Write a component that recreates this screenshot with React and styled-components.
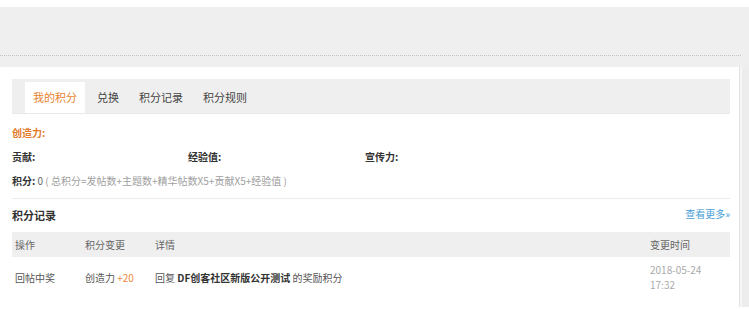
import React from 'react'
import styled, { createGlobalStyle } from 'styled-components'

const GlobalStyle = createGlobalStyle`
  html, body {
    margin: 0;
    padding: 0;
    background: #fff;
  }
  body {
    font-family: "Noto Sans CJK SC", "Liberation Sans", sans-serif;
    font-size: 10px;
    color: #333;
  }
`

const tabs = ['我的积分', '兑换', '积分记录', '积分规则']

const App = () => {
  return (
    <>
      <GlobalStyle />
      <Page>
        <Banner />
        <Body>
          <Panel>
            <TabBar>
              {tabs.map((t, i) => (
                <Tab key={t} active={i === 0}>
                  {t}
                </Tab>
              ))}
            </TabBar>

            <Stats>
              <InfoLine>
                <Label orange>创造力:</Label>
              </InfoLine>
              <StatGrid>
                <Label>贡献:</Label>
                <Label>经验值:</Label>
                <Label>宣传力:</Label>
              </StatGrid>
              <InfoLine>
                <Label>积分:</Label> <Value>0</Value>{' '}
                <Hint>( 总积分=发帖数+主题数+精华帖数X5+贡献X5+经验值 )</Hint>
              </InfoLine>
            </Stats>

            <SectionHead>
              <SectionTitle>积分记录</SectionTitle>
              <MoreLink href="#">查看更多»</MoreLink>
            </SectionHead>

            <Table>
              <HeadRow>
                <Cell w={70}>操作</Cell>
                <Cell w={70}>积分变更</Cell>
                <Cell grow>详情</Cell>
                <Cell w={83}>变更时间</Cell>
              </HeadRow>
              <Row>
                <Cell w={70}>回帖中奖</Cell>
                <Cell w={70}>
                  创造力 <Plus>+20</Plus>
                </Cell>
                <Cell grow>
                  回复 <Strong>DF创客社区新版公开测试</Strong> 的奖励积分
                </Cell>
                <DateCell w={83}>
                  2018-05-24
                  <br />
                  17:32
                </DateCell>
              </Row>
            </Table>
          </Panel>
          <SideStrip />
        </Body>
      </Page>
    </>
  )
}

export default App

const Page = styled.div`
  padding-top: 7px;
  background: #fff;
  height: 302px;
  overflow: hidden;
`

const Banner = styled.div`
  width: 741px;
  height: 48px;
  background: #efefef;
  border-bottom: 1px dotted #c4c4c4;
  position: relative;
  &::after {
    content: '';
    position: absolute;
    left: 741px;
    top: 0;
    width: 8px;
    height: 49px;
    background: #efefef;
  }
`

const Body = styled.div`
  display: flex;
  background: #efefef;
  padding-top: 11px;
  height: 240px;
`

const Panel = styled.div`
  width: 718px;
  padding: 12px 9px 0 12px;
  background: #fff;
  border-right: 1px solid #e2e2e2;
`

const SideStrip = styled.div`
  flex: 1;
  border-left: 2px solid #f6f6f6;
  background: #ededed;
`

const TabBar = styled.div`
  display: flex;
  align-items: flex-end;
  height: 35px;
  background: #efefef;
  padding-left: 13px;
  border-bottom: 1px solid #e9e9e9;
  box-sizing: border-box;
`

const Tab = styled.div`
  height: 31px;
  line-height: 31px;
  padding: 0 8px;
  margin-right: 4px;
  font-size: 11px;
  color: ${(p) => (p.active ? '#e8822f' : '#444')};
  background: ${(p) => (p.active ? '#fff' : 'transparent')};
`

const Stats = styled.div`
  padding-top: 7px;
  padding-bottom: 5px;
  border-bottom: 1px solid #ececec;
`

const InfoLine = styled.div`
  line-height: 24px;
`

const StatGrid = styled.div`
  display: grid;
  grid-template-columns: 176px 177px 1fr;
  line-height: 24px;
`

const Label = styled.span`
  font-weight: bold;
  color: ${(p) => (p.orange ? '#e27b2a' : '#333')};
`

const Value = styled.span`
  color: #666;
`

const Hint = styled.span`
  color: #a0a0a0;
`

const SectionHead = styled.div`
  display: flex;
  justify-content: space-between;
  align-items: center;
  padding-top: 4px;
  height: 24px;
`

const SectionTitle = styled.span`
  font-size: 11px;
  font-weight: bold;
  color: #333;
`

const MoreLink = styled.a`
  font-size: 10px;
  color: #4a9fd6;
  text-decoration: none;
  margin-top: -4px;
`

const Table = styled.div`
  margin-top: 5px;
`

const HeadRow = styled.div`
  display: flex;
  align-items: center;
  height: 25px;
  background: #efefef;
  color: #666;
`

const Row = styled.div`
  display: flex;
  align-items: center;
  height: 40px;
  color: #555;
`

const Cell = styled.div`
  box-sizing: border-box;
  padding-left: 3px;
  ${(p) => (p.grow ? 'flex: 1;' : `width: ${p.w}px;`)}
`

const DateCell = styled(Cell)`
  color: #aaa;
  line-height: 15px;
`

const Plus = styled.span`
  color: #ef8a3c;
`

const Strong = styled.b`
  color: #333;
`
